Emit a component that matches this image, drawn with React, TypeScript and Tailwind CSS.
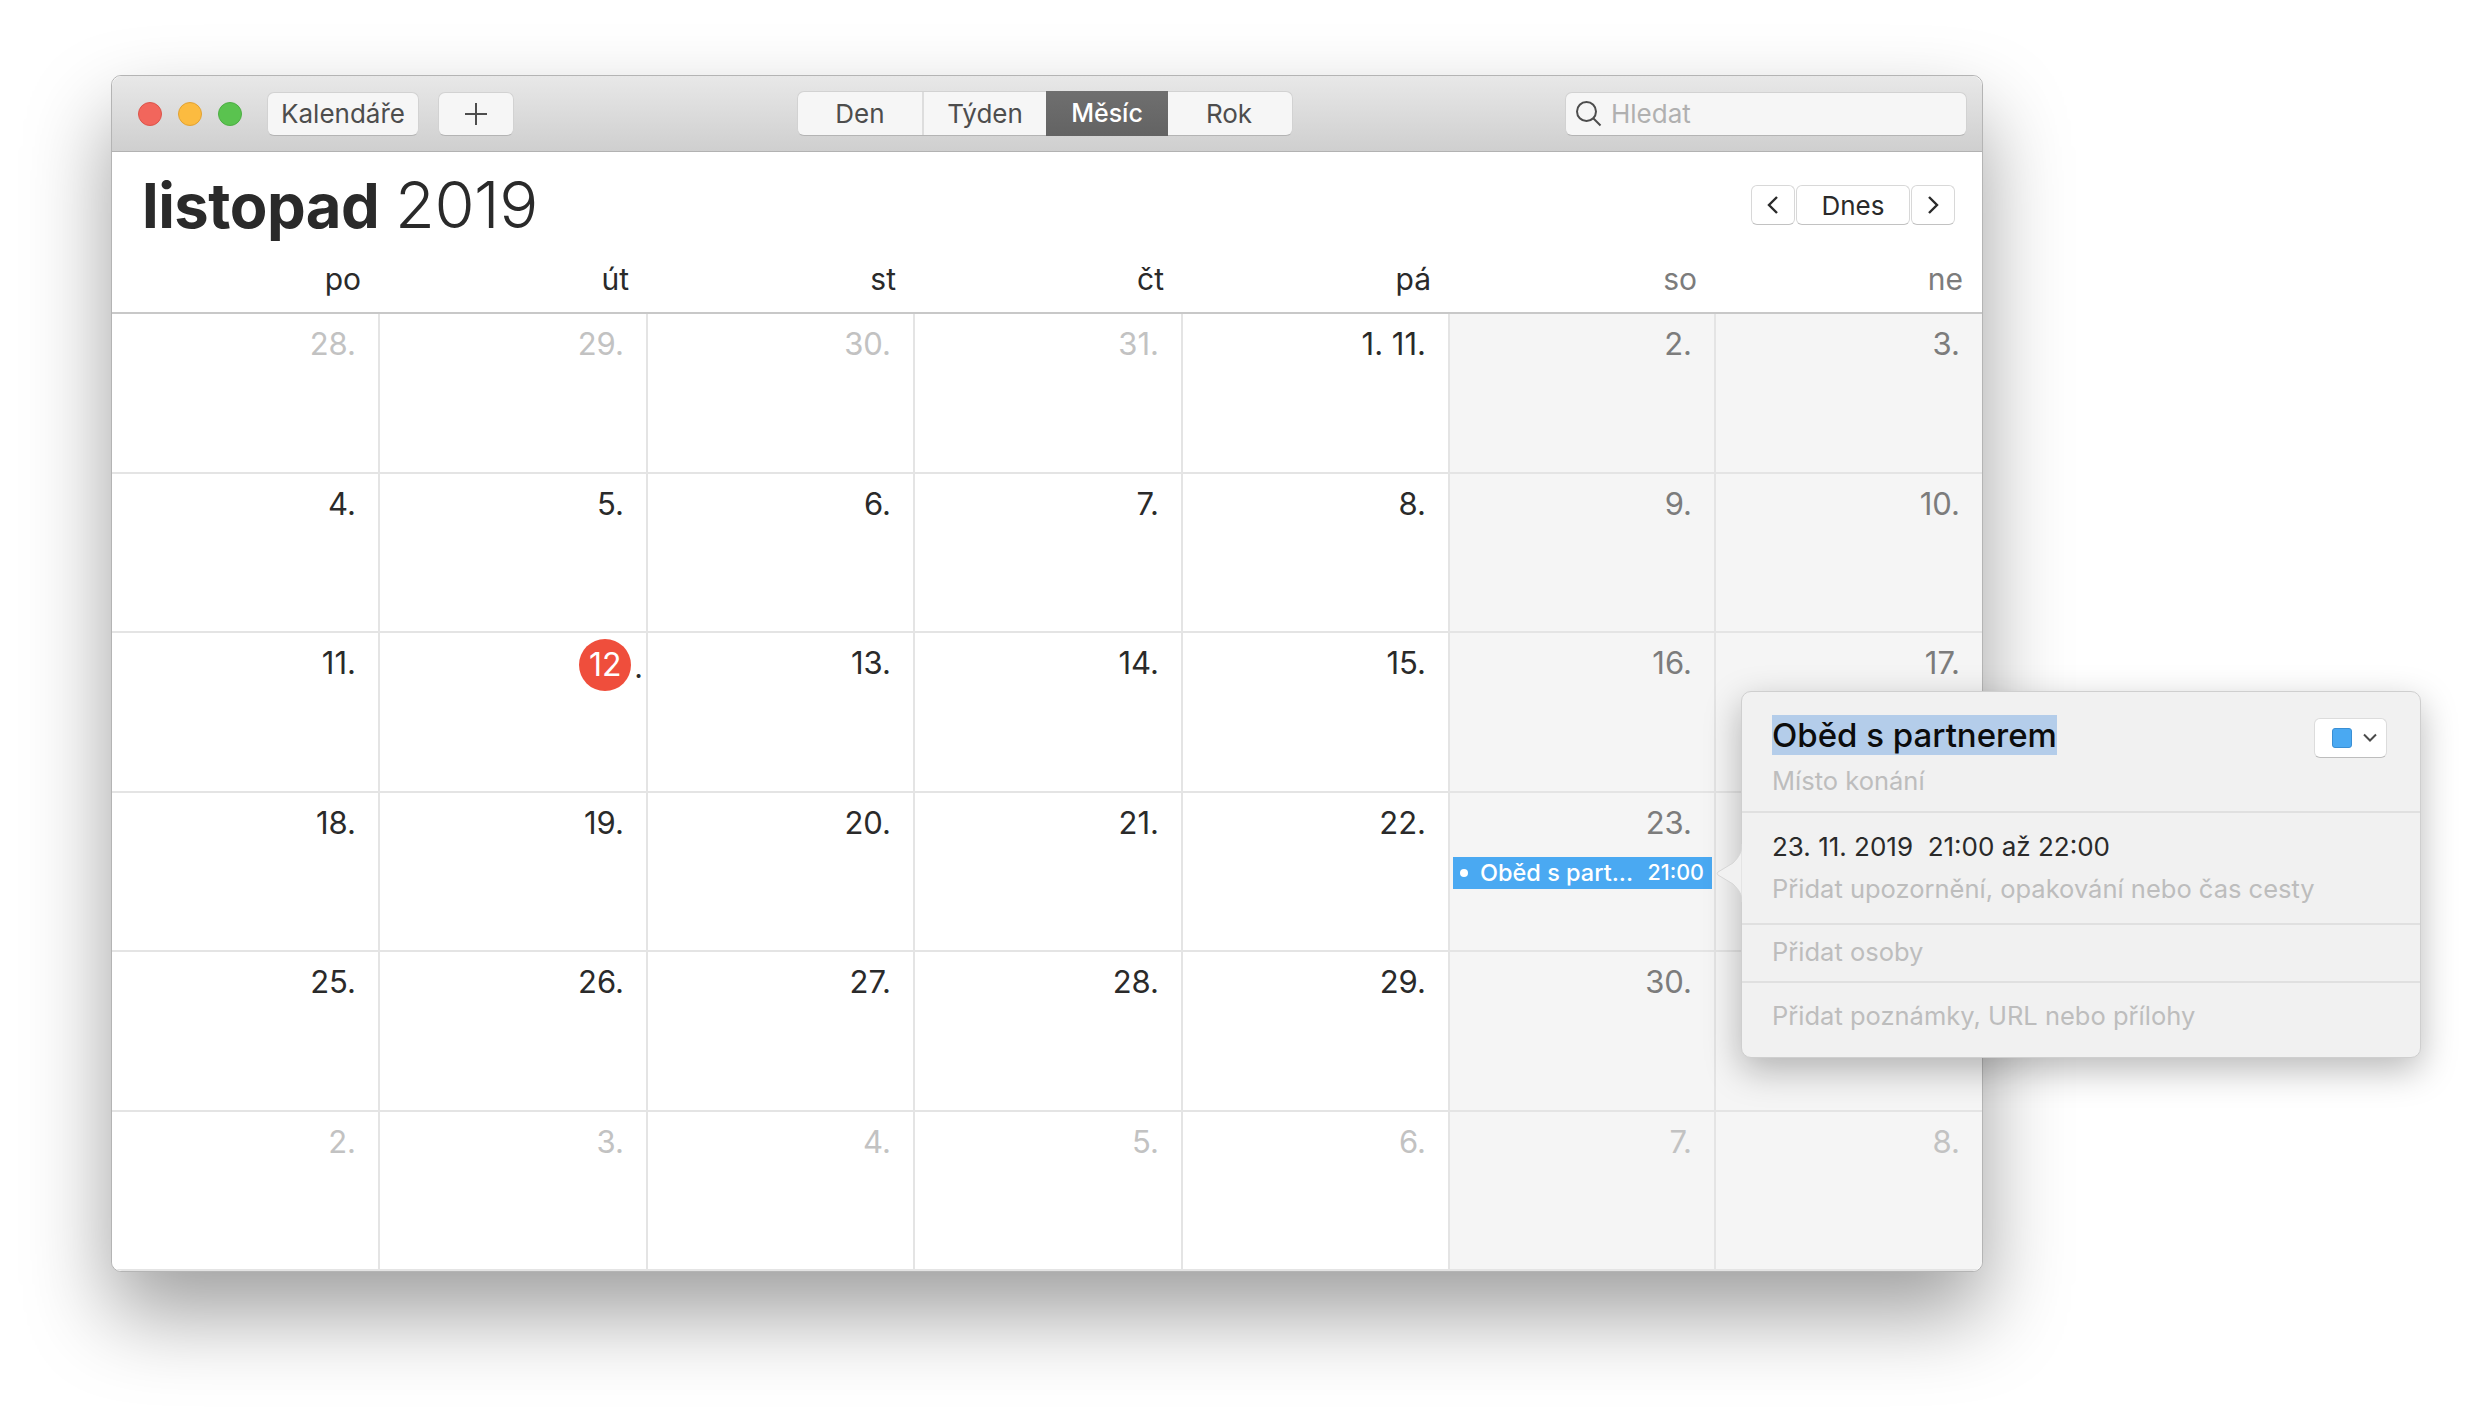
const weeks = [
  ["28.", "29.", "30.", "31.", "1. 11.", "2.", "3."],
  ["4.", "5.", "6.", "7.", "8.", "9.", "10."],
  ["11.", "12.", "13.", "14.", "15.", "16.", "17."],
  // last column of these two weeks sits under the popover
  ["18.", "19.", "20.", "21.", "22.", "23.", ""],
  ["25.", "26.", "27.", "28.", "29.", "30.", ""],
  ["2.", "3.", "4.", "5.", "6.", "7.", "8."],
];

const dayNames = ["po", "út", "st", "čt", "pá", "so", "ne"];

// window controls
const Dot = ({ color }: { color: string }) => <div className={`w-[24px] h-[24px] rounded-full border ${color}`} />;

const ToolButton = ({ children, width }: { children: React.ReactNode; width: string }) => (
  <div className={`${width} h-[44px] flex items-center justify-center rounded-[7px] bg-[#f6f6f6] border border-[#d2d2d2] border-b-[#b4b4b4] text-[26px] text-[#4d4d4d]`}>
    {children}
  </div>
);

const Toolbar = () => (
  <div className="h-[76px] flex items-center pl-[26px] rounded-t-[10px] border-b border-[#b2b2b2] bg-gradient-to-b from-[#e8e8e8] to-[#cfcfcf]">
    <div className="flex gap-[16px]">
      <Dot color="bg-[#f2665c] border-[#dc544a]" />
      <Dot color="bg-[#fcbb40] border-[#e2a232]" />
      <Dot color="bg-[#5ac34f] border-[#4cae43]" />
    </div>
    <div className="ml-[25px]">
      <ToolButton width="w-[152px]">Kalendáře</ToolButton>
    </div>
    <div className="ml-[19px]">
      <ToolButton width="w-[76px]">
        <svg width="24" height="24" viewBox="0 0 24 24" fill="none" stroke="#4d4d4d" strokeWidth="2">
          <path d="M12 1v22M1 12h22" />
        </svg>
      </ToolButton>
    </div>

    {/* Den / Týden / Měsíc / Rok */}
    <div className="ml-[283px] w-[496px] h-[45px] flex rounded-[7px] bg-[#f6f6f6] border border-[#d2d2d2] border-b-[#b4b4b4] text-[26px] text-[#4d4d4d]">
      <div className="w-[126px] flex items-center justify-center border-r-2 border-[#dddddd]">Den</div>
      <div className="w-[122px] flex items-center justify-center">Týden</div>
      <div className="w-[122px] -my-px pt-px flex items-center justify-center text-[25px] font-medium text-white bg-gradient-to-b from-[#6f6f6f] to-[#636363]">Měsíc</div>
      <div className="flex-1 flex items-center justify-center pr-[2px]">Rok</div>
    </div>

    {/* search */}
    <div className="ml-[272px] w-[402px] h-[44px] flex items-center pl-[9px] rounded-[7px] bg-[#f6f6f6] border border-[#d2d2d2] border-b-[#b4b4b4] text-[26px] text-[#b0b0b0]">
      <svg width="27" height="27" viewBox="0 0 27 27" fill="none" stroke="#4d4d4d" strokeWidth="2">
        <circle cx="11.5" cy="11.5" r="9.5" />
        <path d="M18.5 18.5l7 7" />
      </svg>
      <span className="ml-[9px]">Hledat</span>
    </div>
  </div>
);

const NavButton = ({ children, width }: { children: React.ReactNode; width: string }) => (
  <div className={`${width} h-[40px] flex items-center justify-center rounded-[6px] bg-white border border-[#d8d8d8] border-b-[#c2c2c2] text-[26px] text-[#2a2a2a]`}>
    {children}
  </div>
);

const MonthHeader = () => (
  <div className="h-[90px] flex items-start justify-between pl-[30px] pr-[27px] pt-[25px] bg-white">
    <div className="text-[58px] leading-[56px] tracking-[-0.5px] text-[#2a2a2a] whitespace-nowrap">
      <span className="text-[61.5px] font-bold">listopad</span> <span className="text-[65px] font-light">2019</span>
    </div>
    <div className="flex gap-px mt-[8px]">
      <NavButton width="w-[44px]">
        <svg width="14" height="22" viewBox="0 0 14 22" fill="none" stroke="#2a2a2a" strokeWidth="2.4">
          <path d="M11 3L3 11l8 8" />
        </svg>
      </NavButton>
      <NavButton width="w-[114px]">Dnes</NavButton>
      <NavButton width="w-[44px]">
        <svg width="14" height="22" viewBox="0 0 14 22" fill="none" stroke="#2a2a2a" strokeWidth="2.4">
          <path d="M3 3l8 8-8 8" />
        </svg>
      </NavButton>
    </div>
  </div>
);

const DayCell = ({ label, week, col }: { label: string; week: number; col: number }) => {
  const weekend = col >= 5;
  const outside = (week === 0 && col < 4) || week === 5;
  let tone = weekend ? "text-[#7c7c7c]" : "text-[#2a2a2a]";
  if (outside) tone = "text-[#c2c2c2]";
  const today = week === 2 && col === 1;
  const showEvent = week === 3 && col === 5;

  return (
    <div className={`relative border-b-2 border-[#e4e4e4] ${col < 6 ? "border-r-2" : ""} ${weekend ? "bg-[#f5f5f5]" : "bg-white"} ${week === 5 ? "border-b-0" : ""}`}>
      {today ? (
        <div className="flex justify-end items-end h-[58px] pr-[3px] pt-[6px] text-[32px] leading-[36px] text-[#2a2a2a]">
          <div className="w-[52px] h-[52px] rounded-full bg-[#ef4e3c] text-white flex items-center justify-center">12</div>
          <span className="ml-[3px] mb-[6px] text-[30px]">.</span>
        </div>
      ) : (
        <div className={`pt-[12px] pr-[22px] text-right text-[31px] leading-[36px] ${tone}`}>{label}</div>
      )}
      {showEvent && (
        <div className="absolute left-[3px] top-[64px] w-[259px] h-[32px] flex items-center pl-[7px] pr-[8px] bg-[#4aa9f2] text-white whitespace-nowrap">
          <div className="w-[8px] h-[8px] rounded-full bg-white" />
          <span className="ml-[12px] text-[23.5px] font-medium">Oběd s part...</span>
          <span className="ml-auto text-[21.5px] font-medium">21:00</span>
        </div>
      )}
    </div>
  );
};

const EventPopover = () => (
  <div className="absolute left-[1629px] top-[615px] w-[680px] h-[367px] rounded-[10px] bg-[#f1f1f1] border border-[#cfcfcf] shadow-[0_12px_36px_rgba(0,0,0,0.28)] text-[25.5px]">
    {/* arrow to the event */}
    <svg className="absolute left-[-27px] top-[152px]" width="28" height="58" viewBox="0 0 28 58">
      <path d="M27 0C27 8 24 13 18 19L3 28C2 29 2 30 3 31L18 40C24 46 27 50 27 58Z" fill="#f1f1f1" stroke="#d6d6d6" strokeWidth="1" />
      <path d="M27 0h2v58h-2z" fill="#f1f1f1" />
    </svg>
    <div className="h-[121px] pt-[23px] pl-[30px] border-b-2 border-[#e0e0e0] relative">
      <div className="inline-block h-[40px] leading-[40px] bg-[#b4cdea] text-[33px] font-medium text-[#0c0c0c] whitespace-nowrap">Oběd s partnerem</div>
      <div className="mt-[6px] leading-[36px] text-[#bdbdbd]">Místo konání</div>
      <div className="absolute left-[572px] top-[26px] w-[73px] h-[40px] flex items-center pl-[17px] rounded-[6px] bg-white border border-[#dcdcdc] border-b-[#bdbdbd]">
        <div className="w-[20px] h-[20px] rounded-[3px] bg-[#4aa9f2] border border-[#3a8fd4]" />
        <svg className="ml-[10px]" width="16" height="10" viewBox="0 0 16 10" fill="none" stroke="#4a4a4a" strokeWidth="2">
          <path d="M2 1.5l6 6 6-6" />
        </svg>
      </div>
    </div>
    <div className="h-[112px] pl-[30px] pt-[16px] border-b-2 border-[#e0e0e0] leading-[36px] whitespace-nowrap">
      <div className="text-[26px] text-[#2a2a2a]">23. 11. 2019&nbsp; 21:00 až 22:00</div>
      <div className="mt-[6px] text-[#bdbdbd]">Přidat upozornění, opakování nebo čas cesty</div>
    </div>
    <div className="h-[58px] pl-[30px] pb-[2px] flex items-center border-b-2 border-[#e0e0e0] text-[#bdbdbd]">Přidat osoby</div>
    <div className="pl-[30px] pt-[15px] leading-[36px] text-[#bdbdbd]">Přidat poznámky, URL nebo přílohy</div>
  </div>
);

const App = () => {
  return (
    <div className="w-[2492px] h-[1420px] bg-white overflow-hidden pt-[75px] pl-[111px] font-['Inter',sans-serif]">
      <div className="relative w-[1872px] h-[1197px] rounded-[10px] border border-[#b4b4b4] shadow-[0_42px_84px_rgba(0,0,0,0.38)] bg-white flex flex-col">
        <Toolbar />
        <MonthHeader />

        <div className="grid grid-cols-[268px_268px_267px_268px_267px_266px_1fr] h-[72px] border-b-2 border-[#c8c8c8]">
          {dayNames.map((name, i) => (
            <div key={name} className={`pr-[19px] pt-[17px] text-right text-[30px] leading-[40px] ${i >= 5 ? "text-[#7c7c7c]" : "text-[#2a2a2a]"}`}>
              {name}
            </div>
          ))}
        </div>

        <div className="flex-1 grid grid-cols-[268px_268px_267px_268px_267px_266px_1fr] grid-rows-6 rounded-b-[10px] overflow-hidden">
          {weeks.map((week, w) =>
            week.map((label, c) => <DayCell key={`${w}-${c}`} label={label} week={w} col={c} />)
          )}
        </div>

        <EventPopover />
      </div>
    </div>
  );
};

export default App;
